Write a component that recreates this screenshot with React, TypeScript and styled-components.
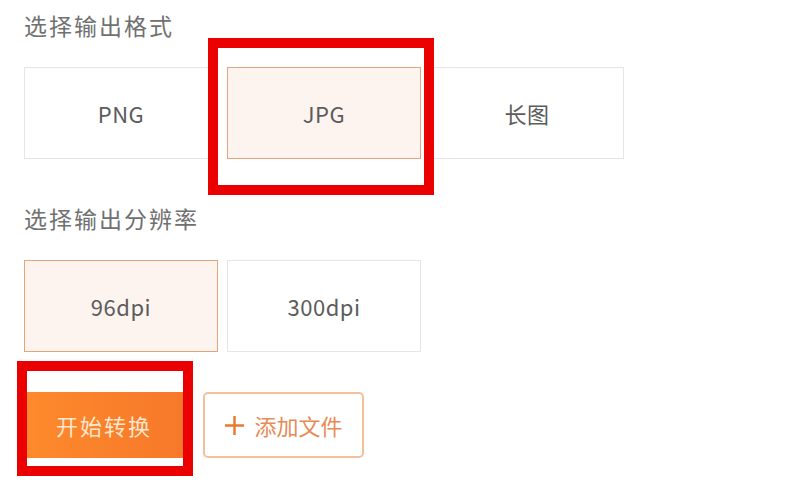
import { useState } from 'react'
import styled, { createGlobalStyle } from 'styled-components'

const formats = ['PNG', 'JPG', '长图']
const resolutions = ['96dpi', '300dpi']

export default function App() {
  const [format, setFormat] = useState('JPG')
  const [dpi, setDpi] = useState('96dpi')

  return (
    <>
      <GlobalStyle />
      <Page>
        <Title>选择输出格式</Title>
        <OptionRow>
          {formats.map((f) => (
            <Option key={f} $active={f === format} onClick={() => setFormat(f)}>
              {f}
            </Option>
          ))}
        </OptionRow>

        <Title $gap={46}>选择输出分辨率</Title>
        <OptionRow>
          {resolutions.map((r) => (
            <Option key={r} $active={r === dpi} onClick={() => setDpi(r)}>
              {r}
            </Option>
          ))}
        </OptionRow>

        <Actions>
          <StartButton>开始转换</StartButton>
          <AddButton>
            <PlusIcon viewBox="0 0 22 22">
              <path d="M11 1v20M1 11h20" />
            </PlusIcon>
            添加文件
          </AddButton>
        </Actions>

        <Highlight $left={208} $top={38} $width={226} $height={157} />
        <Highlight $left={17} $top={361} $width={176} $height={115} />
      </Page>
    </>
  )
}

const GlobalStyle = createGlobalStyle`
  body {
    margin: 0;
    background: #fff;
    font-family: "Noto Sans CJK SC", "Noto Sans", sans-serif;
  }
`

const Page = styled.div`
  position: relative;
  width: 800px;
  height: 498px;
  padding: 12px 0 0 24px;
  box-sizing: border-box;
  overflow: hidden;
`

const Title = styled.div<{ $gap?: number }>`
  margin-top: ${(p) => p.$gap ?? 0}px;
  font-size: 23px;
  line-height: 26px;
  letter-spacing: 2px;
  color: #707070;
`

const OptionRow = styled.div`
  display: grid;
  grid-template-columns: repeat(3, 194px);
  column-gap: 9px;
  margin-top: 29px;
`

const Option = styled.div<{ $active?: boolean }>`
  height: 92px;
  box-sizing: border-box;
  display: flex;
  align-items: center;
  justify-content: center;
  font-size: 22px;
  letter-spacing: 0.5px;
  color: #5c5c5c;
  cursor: pointer;
  border: 1px solid ${(p) => (p.$active ? '#e6a47c' : '#e6e6e6')};
  background: ${(p) => (p.$active ? '#fdf4f0' : '#fff')};
`

const Actions = styled.div`
  display: flex;
  gap: 19px;
  margin-top: 40px;
`

const StartButton = styled.button`
  width: 160px;
  height: 66px;
  border: 0;
  background: linear-gradient(90deg, #fd8a2c, #f7782a);
  color: #fde6cc;
  font-family: inherit;
  font-size: 22px;
  letter-spacing: 2px;
  cursor: pointer;
`

const AddButton = styled.button`
  width: 161px;
  height: 66px;
  box-sizing: border-box;
  border: 2px solid #f4c09c;
  border-radius: 5px;
  background: #fff;
  color: #e88a55;
  font-family: inherit;
  font-size: 22px;
  display: flex;
  align-items: center;
  justify-content: center;
  gap: 9px;
  cursor: pointer;
`

const PlusIcon = styled.svg`
  width: 21px;
  height: 21px;
  stroke: #ea7a30;
  stroke-width: 2.6;
  fill: none;
`

const Highlight = styled.div<{ $left: number; $top: number; $width: number; $height: number }>`
  position: absolute;
  left: ${(p) => p.$left}px;
  top: ${(p) => p.$top}px;
  width: ${(p) => p.$width}px;
  height: ${(p) => p.$height}px;
  box-sizing: border-box;
  border: 10px solid #ea0000;
  pointer-events: none;
`
